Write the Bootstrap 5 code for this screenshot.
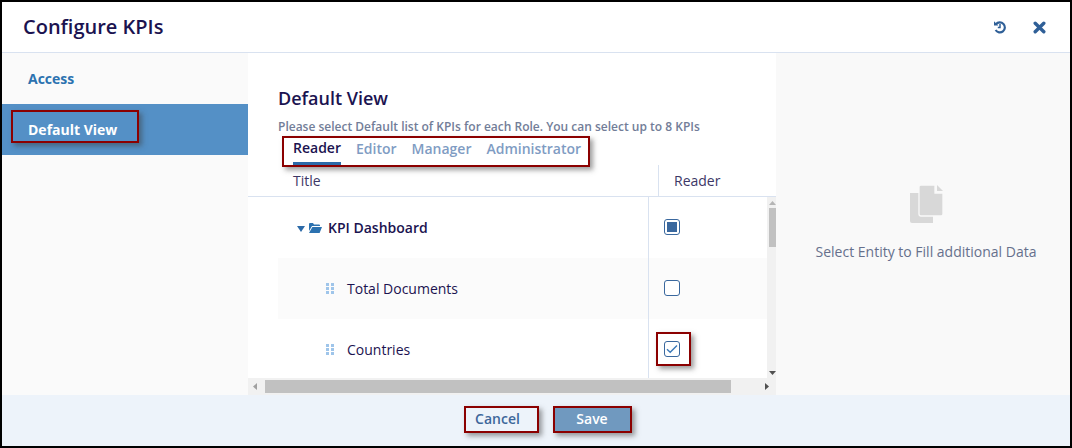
<!DOCTYPE html>
<html lang="en">
<head>
<meta charset="utf-8">
<title>Configure KPIs</title>
<link href="https://cdn.jsdelivr.net/npm/bootstrap@5.3.0/dist/css/bootstrap.min.css" rel="stylesheet">
<style>
html,body{height:100%;margin:0;overflow:hidden}
body{font-family:"Open Sans","Noto Sans",sans-serif;background:#fff;color:#1b1350}
.frame{position:relative;width:1072px;height:448px;border:2px solid #000;display:flex;flex-direction:column;background:#fff}
.top-bar{height:51px;flex:none;border-bottom:1px solid #d9e2f0;padding:0 21px}
.top-bar h1{font-size:20px;font-weight:600;margin:0;color:#1b1350}
.top-icons{gap:26px;padding-right:3px}
.middle{flex:1;min-height:0;display:flex}
.side{width:246px;flex:none;background:#fafafa}
.side-item{height:51px;display:flex;align-items:center;padding-left:26px;font-size:14px;font-weight:700;color:#2c72b0}
.side-item.on{background:#5490c6;color:#fff}
.main{width:528px;flex:none;background:#fff;display:flex;flex-direction:column;min-height:0}
.main-head{padding:34px 30px 0;height:112px;flex:none}
.main-head h2{font-size:18px;font-weight:600;margin:0;line-height:23px;color:#1b1350}
.main-head p{font-size:12px;font-weight:600;color:#727d98;margin:9px 0 0;line-height:15px;white-space:nowrap}
.role-tabs{display:flex;gap:15px;padding-left:15px;margin-top:3px}
.role-tab{font-size:14px;font-weight:600;color:#7f9cc3;line-height:20px;padding:2px 0 4px}
.role-tab.on{color:#1b1350;border-bottom:3px solid #2c6aa8;padding-bottom:4px;margin-top:-1px}
.col-head{height:32px;flex:none;display:flex;border-bottom:1px solid #d9e2f0;font-size:14px;color:#3d3766;align-items:stretch}
.col-head .c1{width:410px;padding-left:45px;display:flex;align-items:center}
.col-head .c2{border-left:1px solid #d9e2f0;padding-left:15px;display:flex;align-items:center;flex:1}
.tbl-wrap{flex:1;min-height:0;display:flex;overflow:hidden}
.rows{flex:1;min-width:0}
.data-row{height:61px;display:flex;font-size:14px;color:#1b1350}
.data-row .t{width:400px;display:flex;align-items:center;flex:none}
.data-row .k{flex:1;border-left:1px solid #d9e2f0;padding-left:15px;display:flex;align-items:center}
.data-row.alt{margin-left:30px;background:#fbfbfb}
.data-row.alt .t{width:370px;padding-left:48px}
.data-row.plain .t{padding-left:78px}
.data-row.root .t{padding-left:49px;font-weight:600}
.caret-ic{margin-right:4px;flex:none;margin-top:2px}
.folder-ic{margin-right:6px;flex:none}
.grip{margin-right:13px;flex:none}
.tick{width:16px;height:16px;margin-bottom:1px;border:1px solid #3a689e;border-radius:3px;display:flex;align-items:center;justify-content:center;background:#fff}
.tick i{display:block;width:10px;height:10px;background:#3a689e}
.v-scroll{width:9px;flex:none;background:#f1f1f1;display:flex;flex-direction:column;align-items:flex-end;justify-content:space-between;padding:4px 0 3px}
.v-thumb{width:7px;height:39px;background:#c1c1c1;margin-top:3px;margin-bottom:auto}
.h-scroll{height:17px;flex:none;background:#f1f1f1;display:flex;align-items:center}
.h-thumb{width:466px;height:13px;background:#c1c1c1;margin-left:18px}
.h-arrow{margin-left:34px}
.h-left{margin-left:5px;margin-right:-10px}
.info{flex:1;background:#f9f9f9;display:flex;flex-direction:column;align-items:center;padding:132px 0 0 6px;font-size:14px;color:#66708c}
.info svg{margin-bottom:18px}
.bottom-bar{height:51px;flex:none;background:#edf3fa;display:flex;align-items:center;justify-content:center;gap:25px;padding:0 0 3px 26px}
.act{font-size:14px;font-weight:600;border:0;background:transparent;color:#3d679b;padding:0;line-height:26px;border-radius:2px}
.act.save{background:#7099bf;color:#fff;width:78px;height:26px}
.act.cancel{width:61px}
.mark-box{position:absolute;border:2px solid #8b0000;box-shadow:3px 3px 5px rgba(60,60,60,.5);pointer-events:none}
.mb1{left:9px;top:108px;width:128px;height:33px}
.mb2{left:280px;top:134px;width:308px;height:31px}
.mb3{left:654px;top:330px;width:35px;height:34px}
.mb4{left:462px;top:404px;width:75px;height:27px}
.mb5{left:551px;top:404px;width:79px;height:27px}
</style>
</head>
<body>
<div class="frame">
  <div class="top-bar d-flex align-items-center justify-content-between">
    <h1>Configure KPIs</h1>
    <div class="top-icons d-flex align-items-center">
      <svg width="14" height="14" viewBox="0 0 14 14" fill="none" stroke="#2f5f97" stroke-width="2.200"><path d="M3 4.200A5 5 0 1 1 2.600 10"/><path d="M1 1.200v4.300h4.300z" fill="#2f5f97" stroke="none"/><path d="M7 4v3.400H4.800" stroke-width="1.500"/></svg>
      <svg width="13" height="13" viewBox="0 0 13 13" stroke="#2f5f97" stroke-width="3.400" stroke-linecap="round"><path d="M2.200 2.200l8.600 8.600M10.800 2.200l-8.600 8.600"/></svg>
    </div>
  </div>
  <div class="middle">
    <div class="side">
      <div class="side-item">Access</div>
      <div class="side-item on">Default View</div>
    </div>
    <div class="main">
      <div class="main-head">
        <h2>Default View</h2>
        <p>Please select Default list of KPIs for each Role. You can select up to 8 KPIs</p>
        <div class="role-tabs">
          <div class="role-tab on">Reader</div>
          <div class="role-tab">Editor</div>
          <div class="role-tab">Manager</div>
          <div class="role-tab">Administrator</div>
        </div>
      </div>
      <div class="col-head">
        <div class="c1">Title</div>
        <div class="c2">Reader</div>
      </div>
      <div class="tbl-wrap">
        <div class="rows">
          <div class="data-row root">
            <div class="t">
              <svg class="caret-ic" width="8" height="6" viewBox="0 0 8 6"><path d="M0 0h8L4 6z" fill="#2c6aa8"/></svg>
              <svg class="folder-ic" width="13" height="10" viewBox="0 0 13 10"><path d="M0 1q0-1 1-1h3l1 1.500h5q1 0 1 1V3H3L0 8z" fill="#2c72b0"/><path d="M3.400 4H13l-2.400 6H0z" fill="#2c72b0"/></svg>
              KPI Dashboard
            </div>
            <div class="k"><span class="tick"><i></i></span></div>
          </div>
          <div class="data-row alt">
            <div class="t">
              <svg class="grip" width="8" height="11" viewBox="0 0 8 11" fill="#9fc5ea"><rect width="3" height="3"/><rect x="5" width="3" height="3"/><rect y="4" width="3" height="3"/><rect x="5" y="4" width="3" height="3"/><rect y="8" width="3" height="3"/><rect x="5" y="8" width="3" height="3"/></svg>
              Total Documents
            </div>
            <div class="k"><span class="tick"></span></div>
          </div>
          <div class="data-row plain">
            <div class="t">
              <svg class="grip" width="8" height="11" viewBox="0 0 8 11" fill="#9fc5ea"><rect width="3" height="3"/><rect x="5" width="3" height="3"/><rect y="4" width="3" height="3"/><rect x="5" y="4" width="3" height="3"/><rect y="8" width="3" height="3"/><rect x="5" y="8" width="3" height="3"/></svg>
              Countries
            </div>
            <div class="k"><span class="tick"><svg width="12" height="10" viewBox="0 0 12 10" fill="none" stroke="#3a78b8" stroke-width="1.400"><path d="M1 5.200l3.200 3L11 1.500"/></svg></span></div>
          </div>
        </div>
        <div class="v-scroll">
          <svg width="7" height="4" viewBox="0 0 7 4"><path d="M0 4L3.500 0 7 4z" fill="#b5b5b5"/></svg>
          <div class="v-thumb"></div>
          <svg width="7" height="4" viewBox="0 0 7 4"><path d="M0 0L3.500 4 7 0z" fill="#505050"/></svg>
        </div>
      </div>
      <div class="h-scroll">
        <svg class="h-left" width="4" height="7" viewBox="0 0 4 7"><path d="M4 0L0 3.500 4 7z" fill="#a0a0a0"/></svg>
        <div class="h-thumb"></div>
        <svg class="h-arrow" width="4" height="7" viewBox="0 0 4 7"><path d="M0 0L4 3.500 0 7z" fill="#505050"/></svg>
      </div>
    </div>
    <div class="info">
      <svg width="33" height="38" viewBox="0 0 33 38"><path d="M0 8h23v30H2q-2 0-2-2z" fill="#d8d8d8"/><path d="M11 0H25V8H33V29q0 2-2 2H11q-2 0-2-2V2q0-2 2-2z" fill="#d8d8d8" stroke="#f9f9f9" stroke-width="1.300"/><path d="M27 0l6 6h-6z" fill="#d8d8d8"/></svg>
      <div>Select Entity to Fill additional Data</div>
    </div>
  </div>
  <div class="bottom-bar">
    <button type="button" class="act cancel">Cancel</button>
    <button type="button" class="act save">Save</button>
  </div>
  <div class="mark-box mb1"></div>
  <div class="mark-box mb2"></div>
  <div class="mark-box mb3"></div>
  <div class="mark-box mb4"></div>
  <div class="mark-box mb5"></div>
</div>
<script src="https://cdn.jsdelivr.net/npm/bootstrap@5.3.0/dist/js/bootstrap.bundle.min.js"></script>
</body>
</html>
